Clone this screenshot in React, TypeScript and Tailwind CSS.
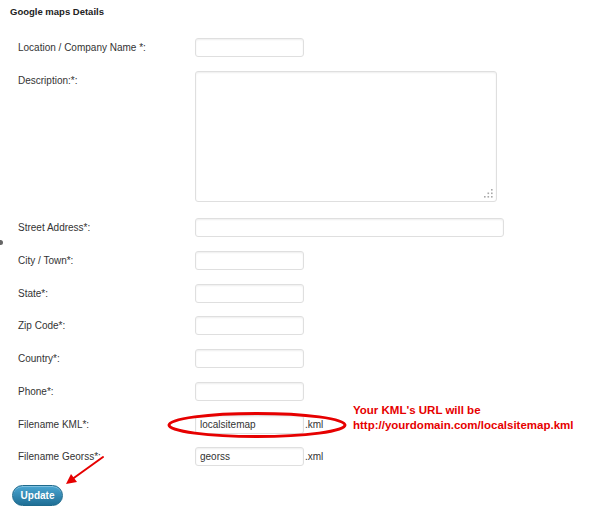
const FONT = "font-['Liberation_Sans',Arial,sans-serif]"

const inputCls =
	'h-[19px] rounded-[3px] border border-[#dfdfdf] bg-white px-[4px] text-[10px] leading-[17px] text-[#333] shadow-[inset_0_1px_2px_rgba(0,0,0,0.07)] outline-none'

function Row({
	label,
	children,
	className = '',
}: {
	label: string
	children: React.ReactNode
	className?: string
}) {
	return (
		<div className={`flex items-start ${className}`}>
			<label className="w-[177px] shrink-0 text-[10px] leading-[19px] text-[#333]">
				{label}
			</label>
			{children}
		</div>
	)
}

function ResizeGrip() {
	return (
		<svg
			width="10"
			height="10"
			viewBox="0 0 10 10"
			className="pointer-events-none absolute bottom-[4px] right-[4px]"
		>
			{[
				[8, 1],
				[8, 4.5],
				[4.5, 4.5],
				[8, 8],
				[4.5, 8],
				[1, 8],
			].map(([x, y]) => (
				<rect key={`${x}-${y}`} x={x} y={y} width="1.6" height="1.6" fill="#a8a8a8" />
			))}
		</svg>
	)
}

export default function App() {
	return (
		<div className={`relative h-[506px] w-[600px] overflow-hidden bg-white ${FONT}`}>
			<h3 className="pl-[10px] pt-[6px] text-[9.5px] font-bold leading-[12px] text-[#222]">
				Google maps Details
			</h3>

			<div className="mt-[20px] flex flex-col gap-[13.7px] pl-[18px]">
				<Row label="Location / Company Name *:">
					<input className={`${inputCls} w-[109px]`} />
				</Row>

				<Row label="Description:*:" className="mb-[3px]">
					<div className="relative">
						<textarea className="block h-[131px] w-[302px] resize-none rounded-[3px] border border-[#dfdfdf] bg-white shadow-[inset_0_1px_2px_rgba(0,0,0,0.07)] outline-none" />
						<ResizeGrip />
					</div>
				</Row>

				<Row label="Street Address*:">
					<input className={`${inputCls} w-[309px]`} />
				</Row>
				<Row label="City / Town*:">
					<input className={`${inputCls} w-[109px]`} />
				</Row>
				<Row label="State*:">
					<input className={`${inputCls} w-[109px]`} />
				</Row>
				<Row label="Zip Code*:">
					<input className={`${inputCls} w-[109px]`} />
				</Row>
				<Row label="Country*:">
					<input className={`${inputCls} w-[109px]`} />
				</Row>
				<Row label="Phone*:">
					<input className={`${inputCls} w-[109px]`} />
				</Row>
				<Row label="Filename KML*:">
					<input className={`${inputCls} w-[109px]`} defaultValue="localsitemap" />
					<span className="pl-[1px] text-[10px] leading-[19px] text-[#333]">.kml</span>
				</Row>
				<Row label="Filename Georss*:">
					<input className={`${inputCls} w-[109px]`} defaultValue="georss" />
					<span className="pl-[1px] text-[10px] leading-[19px] text-[#333]">.xml</span>
				</Row>
			</div>

			<button className="ml-[12px] mt-[19px] h-[21px] w-[51px] rounded-full border border-[#1e6a8d] bg-gradient-to-b from-[#4aa6d2] to-[#1f6f96] text-[10px] font-bold leading-[19px] text-white shadow-[inset_0_1px_0_rgba(255,255,255,0.3)]">
				Update
			</button>

			{/* annotations over the form */}
			<svg
				width="182"
				height="28"
				viewBox="0 0 182 28"
				className="pointer-events-none absolute left-[166px] top-[411px]"
			>
				<ellipse cx="91" cy="14" rx="88" ry="11.5" fill="none" stroke="#e60000" strokeWidth="3" />
			</svg>

			<div className="absolute left-[353px] top-[403px] text-[11.5px] font-bold leading-[15px] text-[#e60000]">
				Your KML's URL will be
				<br />
				http://yourdomain.com/localsitemap.kml
			</div>

			<svg
				width="46"
				height="34"
				viewBox="0 0 46 34"
				className="pointer-events-none absolute left-[62px] top-[454px]"
			>
				<line x1="41" y1="3" x2="9" y2="26" stroke="#e60000" strokeWidth="2" strokeLinecap="round" />
				<polygon points="4,30 9,20 15,28" fill="#e60000" />
			</svg>

			<div className="absolute left-0 top-[240px] h-[5px] w-[3px] rounded-r-full bg-[#666]" />
		</div>
	)
}
